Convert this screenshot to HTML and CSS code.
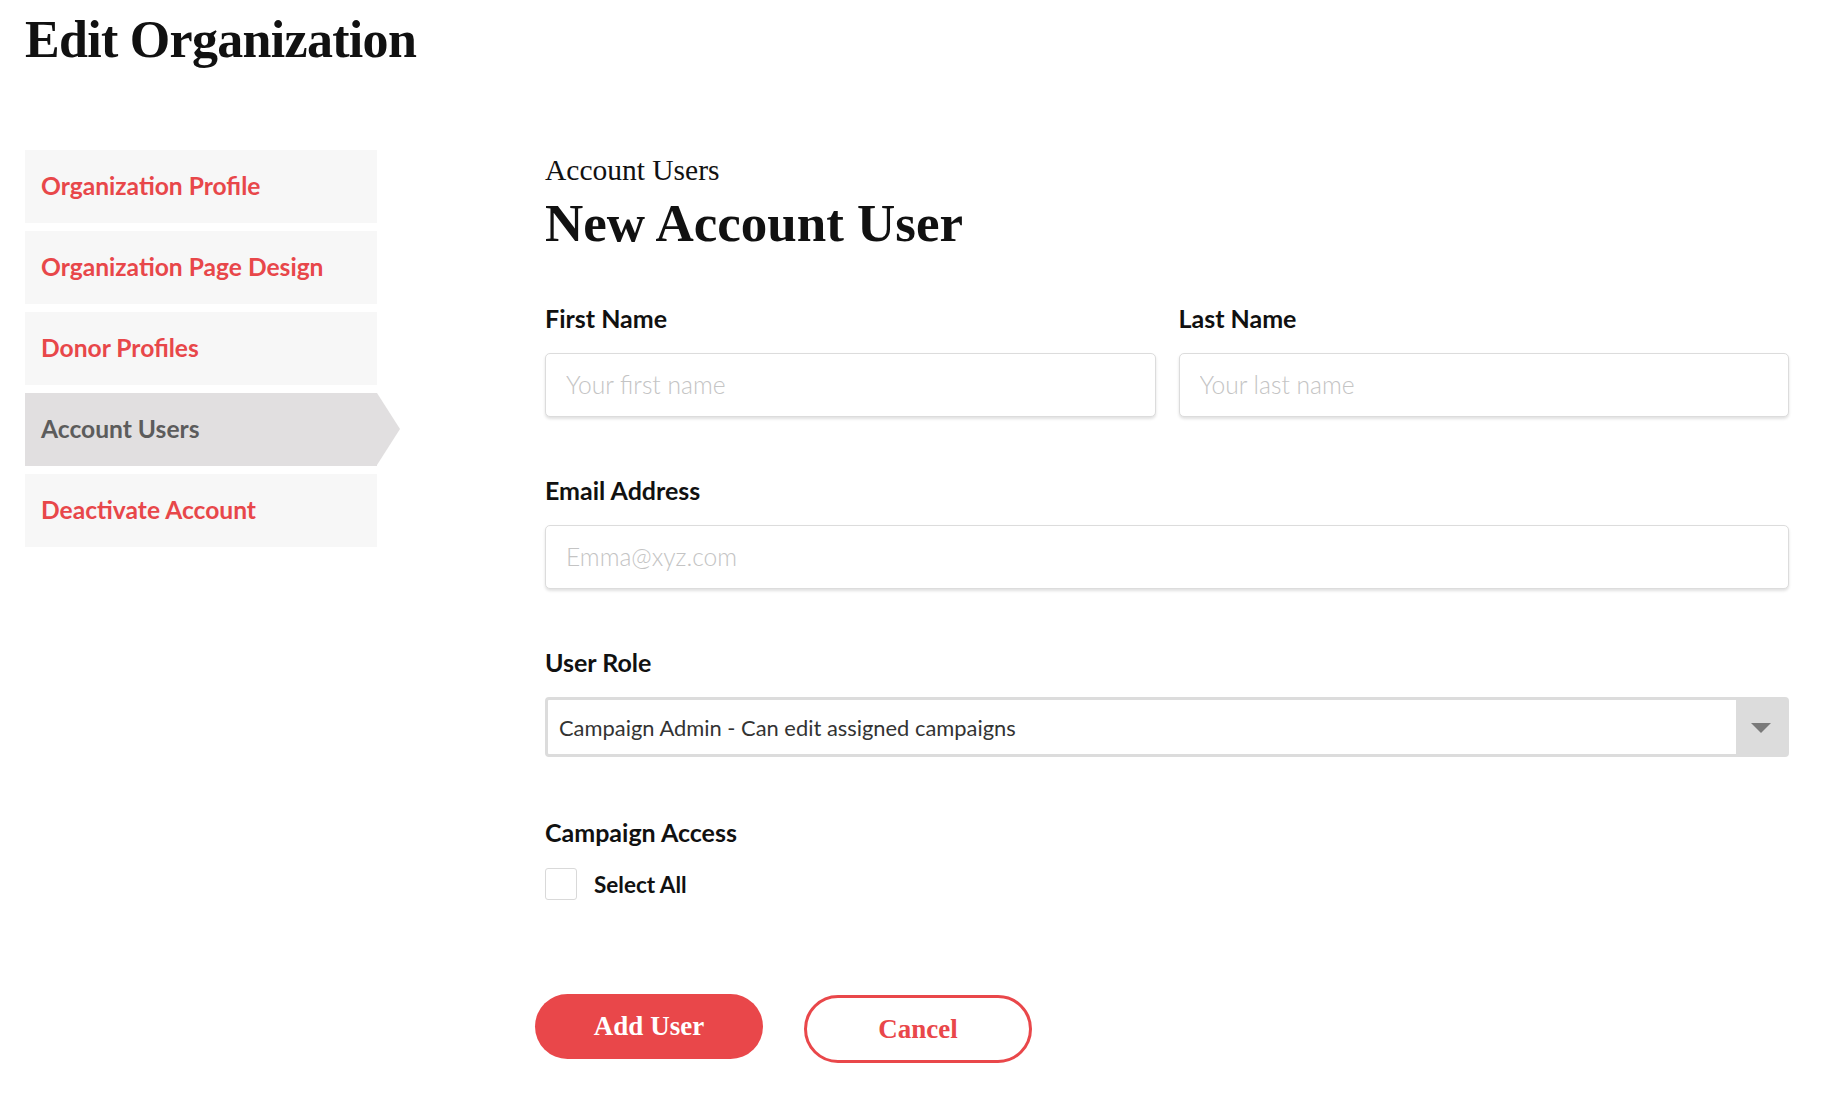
FILE: index.html
```html
<!DOCTYPE html>
<html lang="en">
<head>
<meta charset="utf-8">
<title>Edit Organization</title>
<link rel="stylesheet" href="styles.css">
</head>
<body>
<div class="page">
  <h1 class="page-title">Edit Organization</h1>
  <div class="layout">
    <nav class="sidenav">
      <a class="nav-item" href="#">Organization Profile</a>
      <a class="nav-item" href="#">Organization Page Design</a>
      <a class="nav-item" href="#">Donor Profiles</a>
      <a class="nav-item active" href="#">Account Users</a>
      <a class="nav-item" href="#">Deactivate Account</a>
    </nav>
    <main class="content">
      <p class="eyebrow">Account Users</p>
      <h2 class="form-title">New Account User</h2>

      <div class="form-row">
        <div class="field">
          <label class="field-label">First Name</label>
          <input class="text-input" type="text" placeholder="Your first name">
        </div>
        <div class="field">
          <label class="field-label">Last Name</label>
          <input class="text-input" type="text" placeholder="Your last name">
        </div>
      </div>

      <div class="field field-block">
        <label class="field-label">Email Address</label>
        <input class="text-input" type="text" placeholder="Emma@xyz.com">
      </div>

      <div class="field field-block">
        <label class="field-label">User Role</label>
        <div class="select">
          <div class="select-value">Campaign Admin - Can edit assigned campaigns</div>
          <div class="select-arrow"><span class="caret"></span></div>
        </div>
      </div>

      <div class="field field-block access">
        <label class="field-label access-label">Campaign Access</label>
        <div class="check-row">
          <span class="checkbox"></span>
          <span class="check-label">Select All</span>
        </div>
      </div>

      <div class="actions">
        <button class="btn btn-primary" type="button">Add User</button>
        <button class="btn btn-secondary" type="button">Cancel</button>
      </div>
    </main>
  </div>
</div>
</body>
</html>
```

FILE: styles.css
```css
* {
  box-sizing: border-box;
}

html,
body {
  margin: 0;
  background: #ffffff;
}

body {
  font-family: Lato, "Noto Sans", sans-serif;
  color: #111111;
}

.page {
  padding: 9px 37px 0 25px;
}

.page-title {
  margin: 0;
  font-family: "Liberation Serif", serif;
  font-weight: 700;
  font-size: 52px;
  line-height: 62px;
  letter-spacing: -0.7px;
  color: #111111;
}

.layout {
  display: flex;
  align-items: flex-start;
  margin-top: 79px;
}

.sidenav {
  width: 352px;
  flex: none;
  display: flex;
  flex-direction: column;
  gap: 8px;
}

.nav-item {
  position: relative;
  display: flex;
  align-items: center;
  height: 73px;
  padding: 0 0 2px 16px;
  background: #f7f7f7;
  color: #e8474a;
  font-weight: 700;
  font-size: 24.6px;
  line-height: 30px;
  text-decoration: none;
}

.nav-item.active {
  background: #e1dfe0;
  color: #5c5c5c;
}

.nav-item.active::after {
  content: "";
  position: absolute;
  left: 100%;
  top: 0;
  border-left: 23px solid #e1dfe0;
  border-top: 36.5px solid transparent;
  border-bottom: 36.5px solid transparent;
}

.content {
  flex: 1;
  margin-left: 168px;
}

.eyebrow {
  margin: 1.5px 0 0;
  font-family: "Liberation Serif", serif;
  font-weight: 400;
  font-size: 29.5px;
  line-height: 36px;
  color: #111111;
}

.form-title {
  margin: 4.5px 0 0;
  font-family: "Liberation Serif", serif;
  font-weight: 700;
  font-size: 53px;
  line-height: 62px;
  color: #111111;
}

.form-row {
  display: grid;
  grid-template-columns: 1fr 1fr;
  gap: 23px;
  margin-top: 49px;
}

.field-label {
  display: block;
  font-weight: 700;
  font-size: 25px;
  line-height: 30px;
  margin-bottom: 20px;
  color: #111111;
}

.text-input {
  display: block;
  width: 100%;
  height: 64px;
  margin: 0;
  padding: 0 20px 2px;
  border: 1px solid #dcdcdc;
  border-radius: 5px;
  box-shadow: 0 2px 3px rgba(0, 0, 0, 0.12);
  background: #ffffff;
  font-family: Lato, "Noto Sans", sans-serif;
  font-weight: 300;
  font-size: 24.6px;
  color: #333333;
  outline: none;
}

.text-input::placeholder {
  color: #c4c4c4;
}

.field-block {
  margin-top: 58px;
}

.select {
  display: flex;
  height: 60px;
  border: 3px solid #dcdcdc;
  border-radius: 4px;
  background: #ffffff;
}

.select-value {
  flex: 1;
  display: flex;
  align-items: center;
  padding-left: 11px;
  font-size: 21.9px;
  color: #333333;
}

.select-arrow {
  width: 50px;
  flex: none;
  background: #dcdcdc;
  display: flex;
  align-items: center;
  justify-content: center;
}

.caret {
  width: 0;
  height: 0;
  margin-top: 2px;
  border-left: 10.5px solid transparent;
  border-right: 10.5px solid transparent;
  border-top: 10px solid #7a7a7a;
}

.field-block.access {
  margin-top: 60px;
}

.access-label {
  margin-bottom: 21px;
}

.check-row {
  display: flex;
  align-items: center;
  gap: 17px;
}

.checkbox {
  width: 32px;
  height: 32px;
  border: 1px solid #d9d9d9;
  border-radius: 3px;
  background: #ffffff;
}

.check-label {
  font-weight: 700;
  font-size: 22.5px;
  color: #111111;
}

.actions {
  display: flex;
  align-items: flex-start;
  gap: 41px;
  margin: 94px 0 0 -10px;
}

.btn {
  width: 228px;
  height: 65px;
  padding: 0;
  border-radius: 33px;
  font-family: "Liberation Serif", serif;
  font-weight: 700;
  font-size: 27px;
  display: flex;
  align-items: center;
  justify-content: center;
  cursor: pointer;
}

.btn-primary {
  background: #e9474a;
  color: #ffffff;
  border: none;
}

.btn-secondary {
  height: 68px;
  margin-top: 1px;
  border-radius: 34px;
  background: #ffffff;
  color: #e9474a;
  border: 3px solid #e9474a;
}
```
